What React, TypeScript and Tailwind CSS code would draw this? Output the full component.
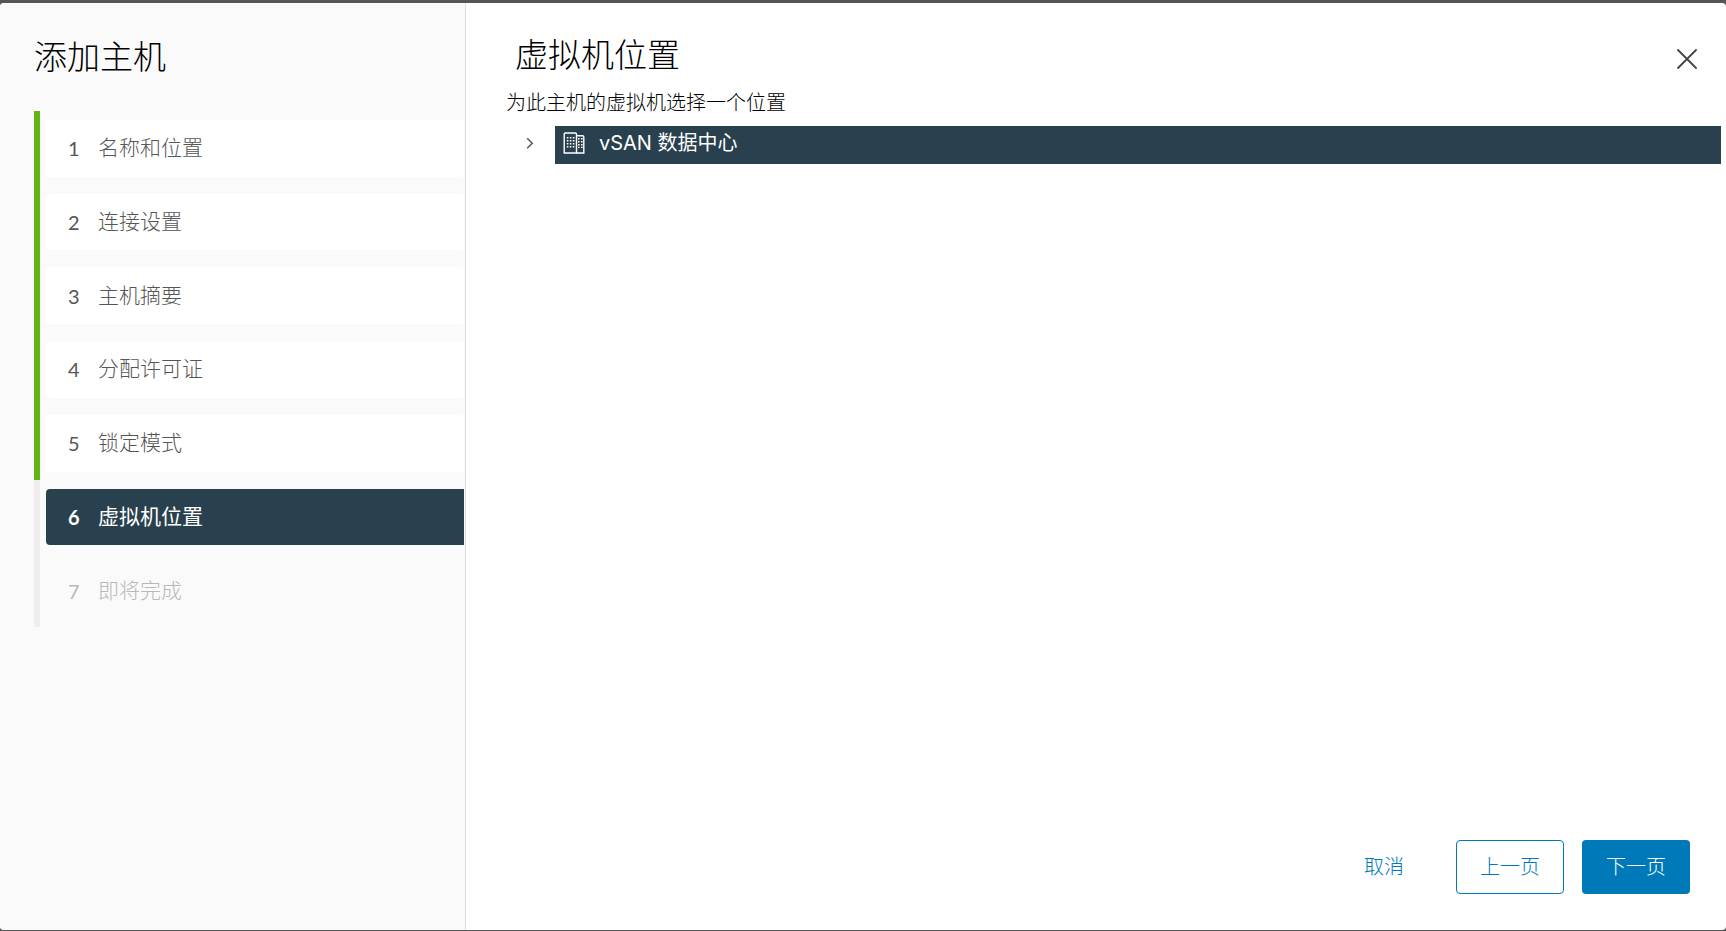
import React, { useState } from 'react';
import clsx from 'clsx';

type Step = {
  id: number;
  title: string;
};

const STEPS: Step[] = [
  { id: 1, title: '名称和位置' },
  { id: 2, title: '连接设置' },
  { id: 3, title: '主机摘要' },
  { id: 4, title: '分配许可证' },
  { id: 5, title: '锁定模式' },
  { id: 6, title: '虚拟机位置' },
  { id: 7, title: '即将完成' },
];

const CURRENT_STEP = 6;

function DatacenterIcon() {
  return (
    <svg
      className="h-[22px] w-[22px] shrink-0"
      viewBox="0 0 22 22"
      fill="none"
      stroke="currentColor"
      strokeWidth="1.4"
      aria-hidden="true"
    >
      <path d="M1.2 21V2.2Q1.2 1 2.4 1h9.9q1.2 0 1.2 1.2V21z" />
      <path d="M13.5 3.7h6.1q1.2 0 1.2 1.2V21h-7.3" />
      <path d="M3.8 5.8h7.6M3.8 8.8h7.6M3.8 11.8h7.6M3.8 14.8h7.6" strokeDasharray="1.6 1.4" />
      <path d="M15 6.8h4.6M15 9.8h4.6M15 12.8h4.6M15 15.4h4.6" strokeDasharray="1.6 1.4" />
    </svg>
  );
}

function StepItem({ step }: { step: Step }) {
  const done = step.id < CURRENT_STEP;
  const active = step.id === CURRENT_STEP;

  return (
    <li className={clsx('flex border-l-6 pt-[9px] pb-2 pl-1.5', done ? 'border-[#60b515]' : 'border-[#eeeeee]')}>
      <button
        type="button"
        disabled={!done && !active}
        aria-current={active ? 'step' : undefined}
        className={clsx(
          'flex w-full items-center rounded-l-sm pl-[22px] text-left text-[21px] leading-6',
          done && 'rounded-r-sm bg-white font-light text-[#565656]',
          active && 'bg-[#29414e] font-normal text-white',
          !done && !active && 'font-light text-[#b8b8b8]',
        )}
      >
        <span className={clsx('w-[30px] font-[Lato,sans-serif] text-[20px]', active ? 'font-bold' : 'font-normal')}>
          {step.id}
        </span>
        <span>{step.title}</span>
      </button>
    </li>
  );
}

function Sidebar() {
  return (
    <aside className="w-[466px] shrink-0 border-r border-[#dedede] bg-[#fafafa] pt-[30px] pr-px pl-[34px]">
      <h1 className="text-[33px] leading-12 font-light text-black">添加主机</h1>
      <ol className="mt-[30px] grid h-[516px] auto-rows-fr">
        {STEPS.map((step) => (
          <StepItem key={step.id} step={step} />
        ))}
      </ol>
    </aside>
  );
}

function LocationTree() {
  const [expanded, setExpanded] = useState(false);

  return (
    <ul role="tree" aria-label="虚拟机位置" className="pr-[5px] pl-[54px]">
      <li role="treeitem" aria-expanded={expanded} aria-selected="true" className="flex items-center">
        <button
          type="button"
          aria-label="展开"
          onClick={() => setExpanded(!expanded)}
          className="flex h-[38px] w-[35px] items-center justify-start pb-1 pl-1 text-[#565656]"
        >
          <svg className="h-3 w-3" viewBox="0 0 12 12" fill="none" stroke="currentColor" strokeWidth="1.5">
            <path d="M3.2 1.2 8.2 6.2 3.2 11.2" />
          </svg>
        </button>
        <div className="flex h-[38px] flex-1 items-center gap-[14px] bg-[#29414e] pb-1 pl-2 text-white">
          <DatacenterIcon />
          <span className="text-[20px] leading-6 font-normal">vSAN 数据中心</span>
        </div>
      </li>
    </ul>
  );
}

function Footer() {
  return (
    <footer className="mt-auto flex justify-end gap-[18px] px-9 pb-9 text-[20px] leading-6 font-light">
      <button type="button" className="h-[54px] w-[108px] rounded text-[#0079b8]">
        取消
      </button>
      <button type="button" className="h-[54px] w-[108px] rounded border border-[#0079b8] text-[#0079b8]">
        上一页
      </button>
      <button type="button" className="h-[54px] w-[108px] rounded bg-[#0079b8] text-white">
        下一页
      </button>
    </footer>
  );
}

export default function App() {
  return (
    <div className="flex min-h-screen bg-[#565656] pt-[3px] pb-px font-[Inter,'Noto_Sans_CJK_SC',sans-serif]">
      <div role="dialog" aria-label="添加主机" className="flex flex-1 overflow-hidden rounded bg-white">
        <Sidebar />
        <main className="flex min-w-0 flex-1 flex-col pt-7">
          <header className="flex items-start justify-between pr-[23px] pl-[49px]">
            <h2 className="text-[33px] leading-12 font-light text-black">虚拟机位置</h2>
            <button type="button" aria-label="关闭" className="mt-3 p-1.5 text-[#444444]">
              <svg className="h-5 w-5" viewBox="0 0 20 20" fill="none" stroke="currentColor" strokeWidth="1.8" strokeLinecap="round">
                <path d="M1 1 19 19M19 1 1 19" />
              </svg>
            </button>
          </header>
          <p className="mb-[7px] pt-2 pl-10 text-[20px] leading-8 font-light text-black">为此主机的虚拟机选择一个位置</p>
          <LocationTree />
          <Footer />
        </main>
      </div>
    </div>
  );
}
